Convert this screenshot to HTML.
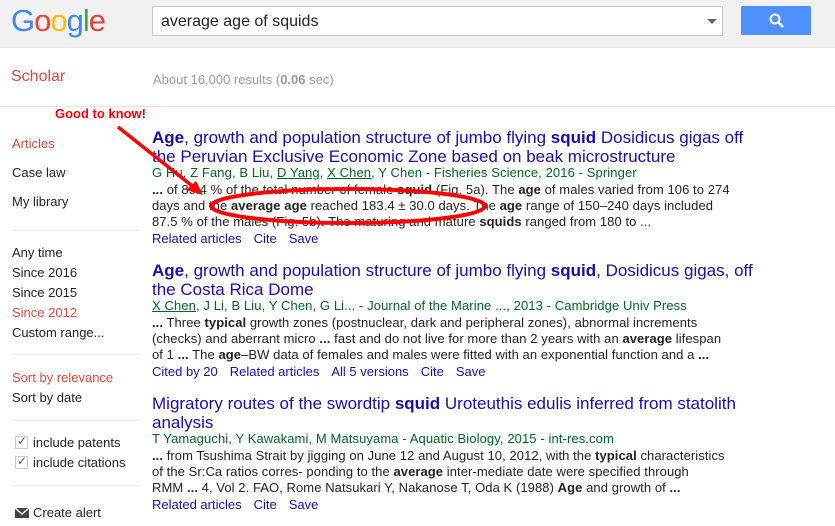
<!DOCTYPE html>
<html><head><style>
body{margin:0;width:835px;height:526px;overflow:hidden;background:#fff;font-family:"Liberation Sans",Arial,sans-serif;position:relative}
.a{position:absolute;white-space:nowrap}
.hdr{position:absolute;left:0;top:0;width:835px;height:47px;background:#f1f1f1;border-bottom:1px solid #e5e5e5}
.t{font-size:17px;color:#1a0dab;line-height:19px}
.au{font-size:13px;color:#006621;line-height:16px;letter-spacing:0.1px}
.s{font-size:13px;color:#222;line-height:16px;letter-spacing:0.07px}
.l{font-size:13px;color:#1a0dab;line-height:16px;word-spacing:0}
.l span{margin-right:12px}
.sb{font-size:13px;color:#222;left:12px}
.red{color:#dd4b39}
.hr{position:absolute;left:12px;width:128px;height:1px;background:#ebebeb}
u{text-decoration:underline}
</style></head><body>
<div class="hdr"></div>
<div class="a" style="left:11px;top:2px;font-size:31px;letter-spacing:-1px;line-height:38px"><span style="color:#4285f4">G</span><span style="color:#ea4335">o</span><span style="color:#fbbc05">o</span><span style="color:#4285f4">g</span><span style="color:#34a853">l</span><span style="color:#ea4335">e</span></div>
<div class="a" style="left:152px;top:6px;width:569px;height:28px;background:#fff;border:1px solid #c8c8c8"></div>
<div class="a" style="left:161px;top:13px;font-size:16px;color:#222">average age of squids</div>
<div class="a" style="left:707px;top:19px;width:0;height:0;border-left:5px solid transparent;border-right:5px solid transparent;border-top:5px solid #666"></div>
<div class="a" style="left:741px;top:6px;width:70px;height:29px;background:#4d90fe;border-radius:2px"></div>
<svg class="a" style="left:768px;top:12px" width="18" height="17" viewBox="0 0 18 17"><circle cx="7" cy="7" r="4.5" fill="none" stroke="#fff" stroke-width="2"/><path d="M10.5 10.5L15 15" stroke="#fff" stroke-width="2.5"/></svg>
<div class="a" style="left:11px;top:68px;font-size:16px;color:#dd4b39">Scholar</div>
<div class="a" style="left:153px;top:72px;font-size:13px;color:#999">About 16,000 results (<b style="color:#999">0.06</b> sec)</div>
<div class="a" style="left:0;top:106px;width:835px;height:1px;background:#e5e5e5"></div>

<div class="a sb red" style="top:136px">Articles</div>
<div class="a sb" style="top:165px">Case law</div>
<div class="a sb" style="top:194px">My library</div>
<div class="hr" style="top:230px"></div>
<div class="a sb" style="top:245px">Any time</div>
<div class="a sb" style="top:265px">Since 2016</div>
<div class="a sb" style="top:285px">Since 2015</div>
<div class="a sb red" style="top:305px">Since 2012</div>
<div class="a sb" style="top:325px">Custom range...</div>
<div class="hr" style="top:354px"></div>
<div class="a sb red" style="top:370px">Sort by relevance</div>
<div class="a sb" style="top:390px">Sort by date</div>
<div class="hr" style="top:420px"></div>
<div class="a sb" style="top:435px;left:15px"><span style="display:inline-block;width:11px;height:11px;border:1px solid #ccc;vertical-align:-2px;margin-right:5px;position:relative"><span style="position:absolute;left:1px;top:-3px;color:#555;font-size:12px">✓</span></span>include patents</div>
<div class="a sb" style="top:455px;left:15px"><span style="display:inline-block;width:11px;height:11px;border:1px solid #ccc;vertical-align:-2px;margin-right:5px;position:relative"><span style="position:absolute;left:1px;top:-3px;color:#555;font-size:12px">✓</span></span>include citations</div>
<div class="hr" style="top:485px"></div>
<div class="a sb" style="top:505px;left:15px"><svg width="14" height="10" style="vertical-align:-1px;margin-right:4px"><rect width="14" height="10" fill="#444"/><path d="M0 0L7 6L14 0" stroke="#fff" stroke-width="1.3" fill="none"/></svg>Create alert</div>

<div class="a t" style="left:152px;top:128px"><b>Age</b>, growth and population structure of jumbo flying <b>squid</b> Dosidicus gigas off</div>
<div class="a t" style="left:152px;top:147px">the Peruvian Exclusive Economic Zone based on beak microstructure</div>
<div class="a au" style="left:152px;top:165px">G Hu, Z Fang, B Liu, <u>D Yang</u>, <u>X Chen</u>, Y Chen - Fisheries Science, 2016 - Springer</div>
<div class="a s" style="left:152px;top:182px"><b>...</b> of 89.4 % of the total number of female <b>squid</b> (Fig. 5a). The <b>age</b> of males varied from 106 to 274</div>
<div class="a s" style="left:152px;top:198px">days and the <b>average age</b> reached 183.4 ± 30.0 days. The <b>age</b> range of 150–240 days included</div>
<div class="a s" style="left:152px;top:214px">87.5 % of the males (Fig. 5b). The maturing and mature <b>squids</b> ranged from 180 to ...</div>
<div class="a l" style="left:152px;top:231px"><span>Related articles</span><span>Cite</span><span>Save</span></div>

<div class="a t" style="left:152px;top:261px"><b>Age</b>, growth and population structure of jumbo flying <b>squid</b>, Dosidicus gigas, off</div>
<div class="a t" style="left:152px;top:280px">the Costa Rica Dome</div>
<div class="a au" style="left:152px;top:298px"><u>X Chen</u>, J Li, B Liu, Y Chen, G Li... - Journal of the Marine ..., 2013 - Cambridge Univ Press</div>
<div class="a s" style="left:152px;top:315px"><b>...</b> Three <b>typical</b> growth zones (postnuclear, dark and peripheral zones), abnormal increments</div>
<div class="a s" style="left:152px;top:331px">(checks) and aberrant micro <b>...</b> fast and do not live for more than 2 years with an <b>average</b> lifespan</div>
<div class="a s" style="left:152px;top:347px">of 1 <b>...</b> The <b>age</b>–BW data of females and males were fitted with an exponential function and a <b>...</b></div>
<div class="a l" style="left:152px;top:364px"><span>Cited by 20</span><span>Related articles</span><span>All 5 versions</span><span>Cite</span><span>Save</span></div>

<div class="a t" style="left:152px;top:394px">Migratory routes of the swordtip <b>squid</b> Uroteuthis edulis inferred from statolith</div>
<div class="a t" style="left:152px;top:413px">analysis</div>
<div class="a au" style="left:152px;top:431px">T Yamaguchi, Y Kawakami, M Matsuyama - Aquatic Biology, 2015 - int-res.com</div>
<div class="a s" style="left:152px;top:448px"><b>...</b> from Tsushima Strait by jigging on June 12 and August 10, 2012, with the <b>typical</b> characteristics</div>
<div class="a s" style="left:152px;top:464px">of the Sr:Ca ratios corres- ponding to the <b>average</b> inter-mediate date were specified through</div>
<div class="a s" style="left:152px;top:480px">RMM <b>...</b> 4, Vol 2. FAO, Rome Natsukari Y, Nakanose T, Oda K (1988) <b>Age</b> and growth of <b>...</b></div>
<div class="a l" style="left:152px;top:497px"><span>Related articles</span><span>Cite</span><span>Save</span></div>

<div class="a" style="left:55px;top:106px;font-size:13px;font-weight:bold;color:#f00">Good to know!</div>
<svg class="a" style="left:0;top:0" width="835" height="526"><path d="M118 127L196 189" stroke="#f00" stroke-width="3.5"/><path d="M203 195L186 190L196 181Z" fill="#f00"/><ellipse cx="348" cy="206" rx="137" ry="17" fill="none" stroke="#f00" stroke-width="4"/></svg>
</body></html>
